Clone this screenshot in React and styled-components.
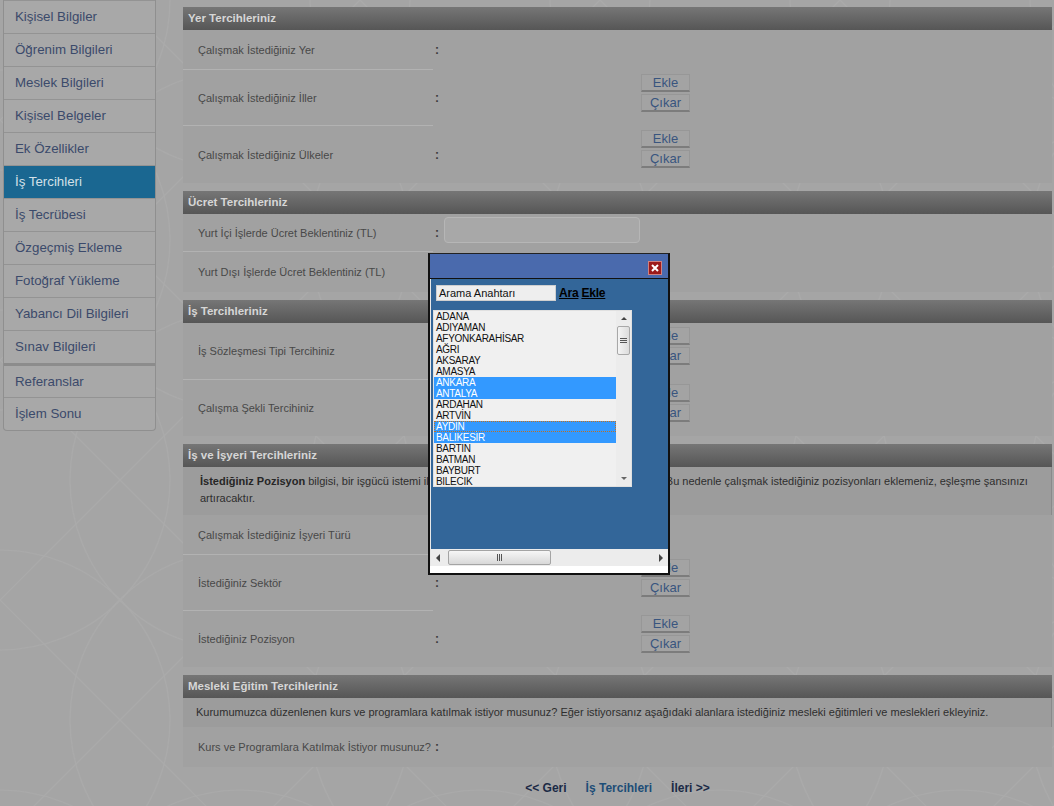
import React from "react";
import styled, { createGlobalStyle } from "styled-components";

const pattern = encodeURIComponent(
  `<svg xmlns="http://www.w3.org/2000/svg" width="240" height="240" viewBox="0 0 240 240"><g fill="none" stroke="#aaaaaa" stroke-width="1.2"><circle cx="0" cy="0" r="170"/><circle cx="240" cy="0" r="170"/><circle cx="0" cy="240" r="170"/><circle cx="240" cy="240" r="170"/><path d="M0 120 L120 0 L240 120 L120 240 Z"/></g></svg>`
);

const GlobalStyle = createGlobalStyle`
  html, body { margin: 0; padding: 0; }
  body {
    background: #a5a5a5 url("data:image/svg+xml,${pattern}");
    font-family: "Liberation Sans", Arial, sans-serif;
    width: 1054px;
    height: 806px;
    overflow: hidden;
  }
`;

const Page = styled.div`
  position: relative;
  display: flex;
  align-items: flex-start;
  height: 806px;
`;

const Sidebar = styled.ul`
  list-style: none;
  margin: 0 0 0 3px;
  padding: 0;
  width: 151px;
  border: 1px solid #8f8f8f;
  border-top: none;
  border-radius: 0 0 4px 4px;
  background: #a8a8a8;
  overflow: hidden;
`;

const SideItem = styled.li`
  height: ${(p) => (p.$thick ? 31 : 32)}px;
  line-height: ${(p) => (p.$thick ? 31 : 32)}px;
  padding-left: 11px;
  font-size: 13.3px;
  color: ${(p) => (p.$active ? "#d3e0e8" : "#3b4a6b")};
  background: ${(p) => (p.$active ? "#1a6791" : "transparent")};
  border-top: ${(p) => (p.$thick ? "3px solid #8c8c8c" : "1px solid #939393")};
  &:first-child { border-top: 1px solid #939393; }
`;

const Main = styled.main`
  margin-left: 27px;
  width: 869px;
  padding-top: 7px;
`;

const Section = styled.section`
  margin-bottom: 8px;
  background: #a1a1a1;
`;

const SectionHeader = styled.h2`
  margin: 0;
  height: 23px;
  line-height: 23px;
  padding-left: 5px;
  font-size: 11.5px;
  font-weight: bold;
  color: #d6d6d6;
  background: linear-gradient(#767676, #565656);
`;

const Row = styled.div`
  display: grid;
  grid-template-columns: 250px 8px 1fr;
  height: ${(p) => p.$h}px;
`;

const Label = styled.div`
  display: flex;
  align-items: center;
  padding-left: 15px;
  font-size: 11px;
  color: #484848;
  border-bottom: ${(p) => (p.$last ? "none" : "1px solid #b2b2b2")};
`;

const Colon = styled.div`
  display: flex;
  align-items: center;
  padding-left: 2px;
  font-size: 12px;
  font-weight: bold;
  color: #3c3c3c;
`;

const Value = styled.div`
  display: flex;
  align-items: flex-start;
  padding-top: 4px;
`;

const ButtonStack = styled.div`
  display: flex;
  flex-direction: column;
  gap: 2px;
  margin-left: 200px;
`;

const Btn = styled.button`
  width: 49px;
  height: 18px;
  padding: 0;
  font-family: "Liberation Sans", Arial, sans-serif;
  font-size: 13px;
  line-height: 16px;
  color: #39557f;
  background: #a3a3a3;
  border: 1px solid #979797;
  border-bottom: 2px solid #7c7c7c;
`;

const TextInput = styled.div`
  width: 194px;
  height: 24px;
  margin-left: 3px;
  margin-top: -1px;
  border: 1px solid #b6b6b6;
  border-radius: 4px;
  background: #a8a8a8;
`;

const Info = styled.div`
  padding: ${(p) => p.$pad || "6px 8px 8px 17px"};
  font-size: 11px;
  line-height: 17px;
  color: #2e2e2e;
  background: #9c9c9c;
  border-right: 1px solid #8a8a8a;
  b { color: #262626; }
`;

const Nav = styled.nav`
  display: flex;
  justify-content: center;
  gap: 19px;
  margin-top: 14px;
  font-size: 12px;
  font-weight: bold;
`;

const NavLink = styled.a`
  color: ${(p) => (p.$current ? "#1d4d77" : "#1b2a45")};
  text-decoration: none;
`;

/* ---------- modal ---------- */

const Modal = styled.div`
  position: absolute;
  left: 428px;
  top: 253px;
  width: 238px;
  height: 319px;
  border: 2px solid #111;
  border-top: 1px solid #222;
  background: #fff;
  display: flex;
  flex-direction: column;
`;

const TitleBar = styled.div`
  height: 24px;
  flex: none;
  background: #4a6aad;
  border-bottom: 1px solid #111;
  display: flex;
  justify-content: flex-end;
  align-items: center;
  padding-right: 6px;
`;

const CloseBtn = styled.div`
  width: 12px;
  height: 12px;
  margin-top: 4px;
  background: #9c1a1a;
  border: 1px solid #d08080;
  display: flex;
  align-items: center;
  justify-content: center;
`;

const ModalBody = styled.div`
  flex: 1;
  display: flex;
  flex-direction: column;
  background: #336699;
  border-left: 1px solid #e8e8e8;
`;

const SearchRow = styled.div`
  display: flex;
  align-items: center;
  gap: 3px;
  padding: 5px 0 0 5px;
  height: 17px;
`;

const SearchInput = styled.div`
  width: 116px;
  height: 14px;
  border: 1px solid #cfcfcf;
  background: #eeeeee;
  font-size: 11px;
  line-height: 14px;
  padding-left: 2px;
  color: #111;
`;

const ModalLink = styled.a`
  font-size: 12px;
  font-weight: bold;
  letter-spacing: -0.2px;
  color: #000;
  text-decoration: underline;
`;

const ListBox = styled.div`
  display: flex;
  margin: 9px 0 0 2px;
  width: 199px;
  height: 177px;
  background: #f0f0f0;
  border: 1px solid #e0e0e0;
  box-sizing: border-box;
`;

const Options = styled.div`
  flex: 1;
`;

const Option = styled.div`
  height: 11px;
  line-height: 11px;
  font-size: 10px;
  letter-spacing: -0.3px;
  padding-left: 2px;
  color: ${(p) => (p.$sel ? "#fff" : "#111")};
  background: ${(p) => (p.$sel ? "#3399ff" : "transparent")};
  outline: ${(p) => (p.$focus ? "1px dotted #c07020" : "none")};
  outline-offset: -1px;
`;

const VScroll = styled.div`
  width: 15px;
  display: flex;
  flex-direction: column;
  align-items: center;
  background: #ececec;
`;

const Arrow = styled.div`
  width: 0;
  height: 0;
  border-left: 3px solid transparent;
  border-right: 3px solid transparent;
  ${(p) => (p.$up ? "border-bottom: 3px solid #444;" : "border-top: 3px solid #666;")}
  margin: 6px 0;
`;

const VThumb = styled.div`
  width: 11px;
  height: 27px;
  border: 1px solid #a8a8a8;
  border-radius: 2px;
  background: linear-gradient(90deg, #f4f4f4, #dcdcdc);
  display: flex;
  flex-direction: column;
  justify-content: center;
  align-items: center;
  gap: 1px;
  span { display: block; width: 7px; height: 1px; background: #555; }
`;

const Spacer = styled.div`
  flex: 1;
`;

const HScroll = styled.div`
  height: 17px;
  display: flex;
  align-items: center;
  background: #ececec;
  padding: 0 5px 0 5px;
`;

const HArrow = styled.div`
  width: 0;
  height: 0;
  border-top: 4px solid transparent;
  border-bottom: 4px solid transparent;
  ${(p) => (p.$left ? "border-right: 4px solid #444;" : "border-left: 4px solid #444;")}
`;

const HThumb = styled.div`
  width: 101px;
  height: 13px;
  margin-left: 8px;
  border: 1px solid #a4a4a4;
  border-radius: 2px;
  background: linear-gradient(#f6f6f6, #d8d8d8);
  display: flex;
  justify-content: center;
  align-items: center;
  gap: 1px;
  span { display: block; width: 1px; height: 7px; background: #555; }
`;

const BottomStrip = styled.div`
  height: 7px;
  background: #fff;
`;

const cities = [
  ["ADANA"], ["ADIYAMAN"], ["AFYONKARAHİSAR"], ["AĞRI"], ["AKSARAY"], ["AMASYA"],
  ["ANKARA", 1], ["ANTALYA", 1], ["ARDAHAN"], ["ARTVİN"], ["AYDIN", 1, 1],
  ["BALIKESİR", 1], ["BARTIN"], ["BATMAN"], ["BAYBURT"], ["BILECIK"],
];

const menu = [
  "Kişisel Bilgiler", "Öğrenim Bilgileri", "Meslek Bilgileri", "Kişisel Belgeler",
  "Ek Özellikler", "İş Tercihleri", "İş Tecrübesi", "Özgeçmiş Ekleme",
  "Fotoğraf Yükleme", "Yabancı Dil Bilgileri", "Sınav Bilgileri", "Referanslar", "İşlem Sonu",
];

const Buttons = () => (
  <ButtonStack>
    <Btn>Ekle</Btn>
    <Btn>Çıkar</Btn>
  </ButtonStack>
);

const FormRow = ({ label, h, last, children }) => (
  <Row $h={h}>
    <Label $last={last}>{label}</Label>
    <Colon>:</Colon>
    <Value>{children}</Value>
  </Row>
);

export default function App() {
  return (
    <>
      <GlobalStyle />
      <Page>
        <Sidebar>
          {menu.map((m) => (
            <SideItem key={m} $active={m === "İş Tercihleri"} $thick={m === "Referanslar"}>
              {m}
            </SideItem>
          ))}
        </Sidebar>

        <Main>
          <Section>
            <SectionHeader>Yer Tercihleriniz</SectionHeader>
            <FormRow label="Çalışmak İstediğiniz Yer" h={40} />
            <FormRow label="Çalışmak İstediğiniz İller" h={56}><Buttons /></FormRow>
            <FormRow label="Çalışmak İstediğiniz Ülkeler" h={57} last><Buttons /></FormRow>
          </Section>

          <Section>
            <SectionHeader>Ücret Tercihleriniz</SectionHeader>
            <FormRow label="Yurt İçi İşlerde Ücret Beklentiniz (TL)" h={38}><TextInput /></FormRow>
            <FormRow label="Yurt Dışı İşlerde Ücret Beklentiniz (TL)" h={40} last />
          </Section>

          <Section>
            <SectionHeader>İş Tercihleriniz</SectionHeader>
            <FormRow label="İş Sözleşmesi Tipi Tercihiniz" h={57}><Buttons /></FormRow>
            <FormRow label="Çalışma Şekli Tercihiniz" h={56} last><Buttons /></FormRow>
          </Section>

          <Section>
            <SectionHeader>İş ve İşyeri Tercihleriniz</SectionHeader>
            <Info>
              <b>İstediğiniz Pozisyon</b> bilgisi, bir işgücü istemi ile sizin aranızdaki eşleşmede en önemli kriterdir. Bu nedenle çalışmak istediğiniz pozisyonları eklemeniz, eşleşme şansınızı artıracaktır.
            </Info>
            <FormRow label="Çalışmak İstediğiniz İşyeri Türü" h={40} />
            <FormRow label="İstediğiniz Sektör" h={56}><Buttons /></FormRow>
            <FormRow label="İstediğiniz Pozisyon" h={56} last><Buttons /></FormRow>
          </Section>

          <Section>
            <SectionHeader>Mesleki Eğitim Tercihleriniz</SectionHeader>
            <Info $pad="6px 10px 6px 13px">
              Kurumumuzca düzenlenen kurs ve programlara katılmak istiyor musunuz? Eğer istiyorsanız aşağıdaki alanlara istediğiniz mesleki eğitimleri ve meslekleri ekleyiniz.
            </Info>
            <FormRow label="Kurs ve Programlara Katılmak İstiyor musunuz?" h={40} last />
          </Section>

          <Nav>
            <NavLink>&lt;&lt; Geri</NavLink>
            <NavLink $current>İş Tercihleri</NavLink>
            <NavLink>İleri &gt;&gt;</NavLink>
          </Nav>
        </Main>

        <Modal>
          <TitleBar>
            <CloseBtn>
              <svg width="8" height="8" viewBox="0 0 8 8">
                <path d="M1 1 L7 7 M7 1 L1 7" stroke="#fff" strokeWidth="2" />
              </svg>
            </CloseBtn>
          </TitleBar>
          <ModalBody>
            <SearchRow>
              <SearchInput>Arama Anahtarı</SearchInput>
              <ModalLink>Ara</ModalLink>
              <ModalLink>Ekle</ModalLink>
            </SearchRow>
            <ListBox>
              <Options>
                {cities.map(([c, sel, focus]) => (
                  <Option key={c} $sel={sel} $focus={focus}>{c}</Option>
                ))}
              </Options>
              <VScroll>
                <Arrow $up />
                <VThumb><span /><span /><span /></VThumb>
                <Spacer />
                <Arrow />
              </VScroll>
            </ListBox>
            <Spacer />
            <HScroll>
              <HArrow $left />
              <HThumb><span /><span /><span /></HThumb>
              <Spacer />
              <HArrow />
            </HScroll>
          </ModalBody>
          <BottomStrip />
        </Modal>
      </Page>
    </>
  );
}
